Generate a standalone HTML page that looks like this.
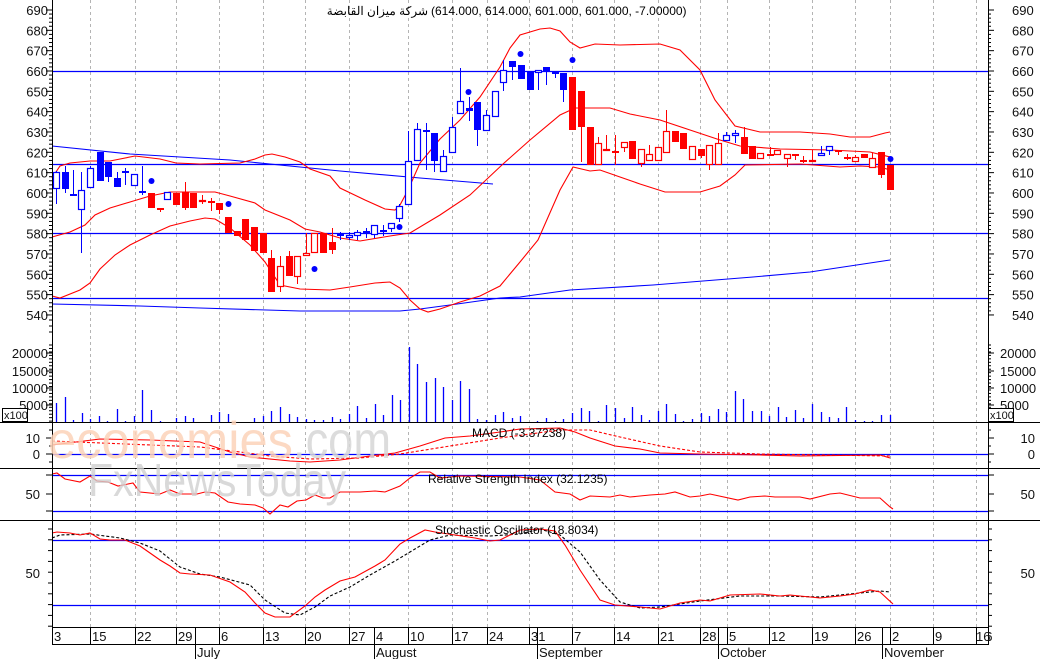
<!DOCTYPE html>
<html><head><meta charset="utf-8">
<style>
html,body{margin:0;padding:0;background:#fff;width:1040px;height:659px;overflow:hidden}
svg{display:block}
text{font-family:"Liberation Sans","Noto Sans CJK SC",sans-serif}
</style></head>
<body>
<svg id="s" width="1040" height="659" viewBox="0 0 1040 659" xmlns="http://www.w3.org/2000/svg">
<rect width="1040" height="659" fill="#fff"/>
<g id="grid"></g>
<g id="lines"></g>
<g id="candles"></g>
<g id="axes"></g>
<g id="wm">
<text x="48" y="458" font-size="52" fill="#fcd2b8" fill-opacity="0.85" textLength="245" lengthAdjust="spacingAndGlyphs">economies</text>
<text x="293" y="458" font-size="52" fill="#d6d6d6" fill-opacity="0.85" textLength="98" lengthAdjust="spacingAndGlyphs">.com</text>
<text x="88" y="496" font-size="46" fill="#cfcfcf" fill-opacity="0.8" textLength="258" lengthAdjust="spacingAndGlyphs">FxNewsToday</text>
</g>
<text x="428" y="15" font-size="12" text-anchor="end" fill="#000">شركة ميزان القابضة</text>
<text x="431" y="15" font-size="12" fill="#000">(614.000, 614.000, 601.000, 601.000, -7.00000)</text>
<text x="472" y="437" font-size="12" fill="#000">MACD (-3.37238)</text>
<text x="428" y="483" font-size="12" fill="#000">Relative Strength Index (32.1235)</text>
<text x="435" y="534" font-size="12" fill="#000">Stochastic Oscillator (18.8034)</text>
</svg>
<script>
var NS="http://www.w3.org/2000/svg";
function el(p,t,a){var e=document.createElementNS(NS,t);for(var k in a)e.setAttribute(k,a[k]);document.getElementById(p).appendChild(e);return e;}
function line(p,x1,y1,x2,y2,c,w,d){var a={x1:x1,y1:y1,x2:x2,y2:y2,stroke:c,'stroke-width':w||1};if(d)a['stroke-dasharray']=d;el(p,'line',a);}
function poly(p,pts,c,d){var a={points:pts.map(function(q){return q.join(',')}).join(' '),fill:'none',stroke:c,'stroke-width':1.1};if(d)a['stroke-dasharray']=d;el(p,'polyline',a);}
function txt(p,x,y,s,anc,sz){var t=el(p,'text',{x:x,y:y,'font-size':sz||13,fill:'#111','text-anchor':anc||'start'});t.textContent=s;}
var L=52,R=988;
var gx=[90,135,176,219,263,305,349,408,452,487,529,572,614,658,700,727,769,812,855,890,933,976];
gx.forEach(function(x){line('grid',x+.5,0,x+.5,627,'#b4b4b4',1,'3,3');});
[422,468,520].forEach(function(y){line('axes',0,y+.5,1040,y+.5,'#000',1);});
line('axes',52,627.5,988,627.5,'#000',1);
line('axes',52,644.5,988,644.5,'#000',1);
line('axes',L+.5,0,L+.5,645,'#000',1);
line('axes',R+.5,0,R+.5,645,'#000',1);
for(var p=690;p>=540;p-=10){var y=10+(690-p)*2.033;txt('axes',48,y+5,String(p),'end');txt('axes',1012,y+5,String(p),'start');
line('axes',L-6,y,L,y,'#000');line('axes',R,y,R+6,y,'#000');
for(var k=1;k<5&&p>540;k++){var yy=y+k*4.066;line('axes',L-3,yy,L,yy,'#000');line('axes',R,yy,R+3,yy,'#000');}}
line('axes',L-3,320,L,320,'#000');line('axes',L-3,326,L,326,'#000');line('axes',L-3,332,L,332,'#000');
[[20000,353],[15000,371],[10000,388],[5000,405]].forEach(function(v){txt('axes',48,v[1]+5,String(v[0]),'end');txt('axes',1000,v[1]+5,String(v[0]),'start');line('axes',L-6,v[1],L,v[1],'#000');line('axes',R,v[1],R+6,v[1],'#000');});
for(var y=345;y<422;y+=3.46){line('axes',L-3,y,L,y,'#000');line('axes',R,y,R+3,y,'#000');}
el('axes','rect',{x:2.5,y:408.5,width:25,height:13,fill:'#fff',stroke:'#000'});txt('axes',4,419,'x100','start',11);
el('axes','rect',{x:988.5,y:408.5,width:25,height:13,fill:'#fff',stroke:'#000'});txt('axes',990,419,'x100','start',11);
txt('axes',40,443,'10','end');txt('axes',40,459,'0','end');txt('axes',1035,443,'10','end');txt('axes',1035,459,'0','end');
[438,454].forEach(function(y){line('axes',L-6,y,L,y,'#000');line('axes',R,y,R+6,y,'#000');});
[430,446,462].forEach(function(y){line('axes',L-3,y,L,y,'#000');line('axes',R,y,R+3,y,'#000');});
txt('axes',40,499,'50','end');txt('axes',1035,499,'50','end');
[475,494,511].forEach(function(y){line('axes',L-6,y,L,y,'#000');line('axes',R,y,R+6,y,'#000');});
txt('axes',40,578,'50','end');txt('axes',1035,578,'50','end');
for(var y=529;y<627;y+=10.8){line('axes',L-4,y,L,y,'#000');line('axes',R,y,R+4,y,'#000');}
var dd=[[52,'3'],[90,'15'],[135,'22'],[176,'29'],[219,'6'],[263,'13'],[305,'20'],[349,'27'],[374,'4'],[408,'10'],[452,'17'],[487,'24'],[529,'31'],[572,'7'],[614,'14'],[658,'21'],[700,'28'],[727,'5'],[769,'12'],[812,'19'],[855,'26'],[890,'2'],[933,'9'],[976,'16']];
dd.forEach(function(d){line('axes',d[0]+.5,627,d[0]+.5,644,'#000');txt('axes',d[0]+2,641,d[1],'start',13);});
[[195,'July'],[374,'August'],[537,'September'],[718,'October'],[882,'November']].forEach(function(m){line('axes',m[0]+.5,627,m[0]+.5,659,'#000');txt('axes',m[0]+2,657,m[1],'start',13);});
el('axes','rect',{x:977,y:628,width:11,height:15,fill:'#fff'});txt('axes',976,641,'16','start',13);
[71,164,233,298,454,475,511,540,605].forEach(function(y){line('lines',L,y+.5,R,y+.5,'#0000ff',1.2);});
poly('lines',[[52,146],[130,154],[230,160],[300,167],[340,171],[420,178],[493,184]],'#0000ff');
poly('lines',[[52,304],[140,306],[200,308],[300,311],[400,311],[420,309],[450,305],[500,298],[520,297],[570,290],[653,285],[753,277],[810,272],[890,260]],'#0000ff');
var red='#ff0000';
poly('lines',[[52,178],[60,166],[70,163],[90,161],[110,161],[135,156],[160,159],[176,163],[200,164],[240,163],[255,159],[265,155],[272,154],[285,157],[300,162],[310,169],[330,176],[340,188],[365,200],[385,209],[395,210],[400,205],[408,190],[420,163],[440,139],[460,120],[480,97],[500,67],[510,48],[520,35],[540,29],[550,28],[560,31],[570,42],[580,48],[595,44],[620,45],[660,44],[680,50],[700,70],[715,100],[735,126],[760,132],[800,132],[830,134],[850,137],[870,137],[885,133],[890,132]],red);
poly('lines',[[52,237],[70,232],[85,225],[95,215],[110,208],[130,202],[150,196],[170,192],[200,192],[215,192],[230,196],[255,203],[265,210],[290,220],[305,229],[320,232],[340,238],[360,241],[390,236],[410,233],[440,215],[470,195],[503,164],[530,140],[560,115],[575,108],[610,108],[630,114],[660,120],[690,130],[720,140],[740,146],[780,149],[830,150],[870,152],[890,157]],red);
poly('lines',[[52,296],[60,298],[80,290],[90,283],[100,269],[115,255],[130,245],[150,235],[170,226],[190,221],[205,218],[215,219],[230,228],[250,245],[265,262],[280,285],[300,289],[330,290],[350,287],[375,283],[390,282],[400,288],[410,300],[420,309],[428,312],[440,309],[460,302],[480,296],[500,286],[520,262],[538,240],[560,190],[573,167],[590,171],[600,170],[620,177],[640,184],[665,192],[700,192],[720,186],[735,175],[745,165],[800,164],[840,167],[860,166],[880,167],[890,170]],red);
var C=[[56,172,189,171,204,'b',0],[65,172,189,166,193,'b',1],[73,194,195,170,195,'b',1],[81,190,210,172,253,'b',0],[90,168,188,166,188,'b',0],[100,152,181,152,181,'b',1],[108,162,177,162,182,'b',1],[117,178,187,172,187,'b',1],[125,171,171,168,185,'b',1],[134,174,186,174,186,'b',0],[142,191,193,166,195,'b',1],
[151,193,208,193,208,'r',1],[160,208,209,208,212,'r',1],[167,192,200,192,200,'b',0],[176,193,205,193,205,'r',1],[185,192,208,182,210,'r',1],[193,193,208,193,208,'r',1],[202,200,202,195,204,'r',0],[211,201,202,198,211,'r',1],[219,203,210,203,214,'r',1],
[228,217,233,217,233,'r',1],[237,231,236,231,236,'r',1],[245,219,240,219,240,'r',1],[254,227,251,227,251,'r',1],[263,233,253,233,253,'r',1],[271,258,292,250,292,'r',1],[280,266,287,256,292,'r',0],[289,256,276,251,276,'r',1],[297,256,277,256,284,'r',0],[306,253,256,233,256,'r',0],[314,233,253,233,253,'r',0],[323,233,253,233,253,'r',1],[332,242,250,228,254,'r',1],
[340,234,236,232,240,'b',1],[349,235,238,232,240,'b',0],[357,232,236,230,240,'b',0],[366,231,233,228,238,'b',1],[374,225,235,225,238,'b',0],[383,230,231,225,236,'b',1],[391,223,229,223,232,'b',0],[399,206,219,204,222,'b',0],[408,161,205,131,205,'b',0],[417,129,161,123,161,'b',0],[426,130,132,123,170,'b',1],[434,133,161,133,172,'b',1],[443,156,172,150,172,'b',0],[452,127,153,117,153,'b',0],[460,101,114,68,114,'b',0],[469,108,111,97,121,'b',1],[477,102,130,102,146,'b',1],[486,115,131,110,131,'b',0],[495,91,117,91,117,'b',0],[503,70,83,60,91,'b',0],[512,61,67,61,80,'b',1],[521,65,79,65,79,'b',1],[530,71,90,71,90,'b',1],[538,70,73,70,90,'b',0],[546,67,72,67,85,'b',1],[555,72,73,72,78,'b',1],[563,73,90,73,102,'b',1],
[572,77,130,77,130,'r',1],[581,91,127,91,162,'r',1],[590,127,165,127,165,'r',1],[598,143,165,137,165,'r',0],[606,149,151,135,151,'r',0],[615,151,152,135,165,'r',1],[624,142,148,142,152,'r',0],[632,141,159,141,159,'r',1],[641,149,164,149,167,'r',0],[649,154,161,145,161,'r',0],[658,147,161,147,161,'r',0],[666,131,153,110,153,'r',0],[675,131,142,131,142,'r',1],[683,133,149,133,149,'r',1],[692,146,160,146,160,'r',0],[701,149,156,149,158,'r',1],[709,145,165,145,170,'r',0],[718,143,165,133,165,'r',0],[726,135,141,132,141,'b',0],[735,133,136,130,143,'b',0],[744,137,154,127,154,'r',1],[752,146,159,146,159,'r',1],[760,153,159,153,159,'r',0],[770,154,156,147,156,'r',1],[777,150,155,150,155,'r',0],[787,154,159,154,167,'r',0],[795,154,155,154,160,'r',1],[803,160,161,156,163,'r',1],[812,160,162,150,162,'r',0],[821,153,156,146,156,'b',0],[829,146,151,146,155,'b',0],[838,150,151,150,155,'r',1],[847,157,158,154,160,'r',1],[855,157,162,155,162,'r',0],[864,154,158,154,158,'r',1],[872,158,168,153,168,'r',0],[881,152,175,152,178,'r',1],[890,165,190,165,190,'r',1]];
C.forEach(function(c){var col=c[5]=='b'?'#0000ff':'#ff0000';line('candles',c[0]+.5,c[3],c[0]+.5,c[4],col,1);
var h=Math.max(c[2]-c[1],1);if(c[6])el('candles','rect',{x:c[0]-3,y:c[1],width:7,height:h+(h<2?1:0),fill:col});else el('candles','rect',{x:c[0]-2.5,y:c[1]+.5,width:6,height:Math.max(h-1,1),fill:'#fff',stroke:col,'stroke-width':1.2});});
[[151,181],[228,204],[314,269],[399,227],[468,92],[520,54],[572,60],[890,159]].forEach(function(d){el('candles','circle',{cx:d[0]+.5,cy:d[1],r:3,fill:'#0000ff'});});
var V=[[56,403],[65,397],[73,420],[82,413],[90,419],[99,416],[107,421],[117,409],[125,421],[134,416],[142,390],[151,410],[160,421],[176,418],[185,416],[193,418],[211,415],[219,412],[228,414],[254,418],[263,416],[271,411],[280,407],[289,414],[297,417],[306,419],[314,420],[323,420],[332,417],[340,419],[349,414],[357,406],[366,418],[375,404],[383,415],[392,395],[400,400],[409,347],[417,364],[426,382],[435,378],[443,387],[452,400],[460,381],[469,389],[477,419],[486,420],[495,415],[503,412],[512,418],[520,416],[529,422],[537,421],[546,418],[555,421],[563,419],[572,413],[581,408],[589,411],[598,421],[606,405],[615,408],[624,418],[632,407],[641,415],[649,420],[658,411],[666,404],[675,414],[683,421],[692,419],[701,413],[709,416],[718,409],[726,412],[735,391],[743,399],[752,411],[761,411],[769,416],[778,407],[786,417],[795,410],[803,418],[812,404],[821,412],[829,417],[838,418],[846,407],[855,420],[864,421],[872,421],[881,415],[890,415]];
V.forEach(function(v){line('candles',v[0]+.5,v[1],v[0]+.5,422,'#0000ff',1.3);});
poly('lines',[[52,445],[100,439],[150,440],[200,442],[230,452],[250,457],[290,461],[310,462],[340,460],[370,456],[395,453],[420,446],[445,438],[470,436],[500,432],[520,429],[560,428],[575,432],[590,438],[615,446],[640,449],[660,453],[700,454],[760,455],[800,456],[880,455],[890,458]],red);
poly('lines',[[52,441],[200,447],[240,452],[270,456],[310,459],[360,458],[400,454],[450,446],[500,438],[560,430],[590,430],[620,437],[660,446],[700,452],[760,454],[890,456]],red,'3,2');
poly('lines',[[52,474],[57,473],[65,479],[80,482],[90,476],[97,481],[108,482],[118,486],[133,483],[140,492],[160,494],[170,490],[180,494],[197,494],[205,492],[215,493],[228,502],[240,504],[255,505],[263,508],[270,514],[280,505],[288,507],[297,501],[306,500],[315,495],[323,498],[330,498],[340,492],[360,492],[375,491],[385,492],[400,486],[410,478],[420,472],[430,472],[440,478],[460,476],[520,477],[540,480],[555,492],[570,494],[580,500],[590,496],[610,497],[620,495],[630,497],[650,495],[665,494],[675,492],[690,497],[700,496],[710,494],[738,500],[750,497],[765,496],[775,497],[800,497],[810,499],[830,494],[840,493],[860,498],[880,498],[890,507],[893,509]],red);
poly('lines',[[52,538],[60,535],[90,534],[120,538],[140,543],[160,551],[180,567],[200,574],[220,577],[250,585],[265,600],[285,613],[300,615],[315,607],[330,596],[350,587],[370,575],[395,561],[410,552],[430,540],[450,535],[490,536],[520,534],[540,529],[560,535],[580,552],[600,580],[620,602],[640,608],[660,607],[700,601],[740,596],[780,596],[820,597],[860,593],[880,591],[890,592]],'#000','3,2');
poly('lines',[[52,533],[57,532],[70,533],[80,535],[90,533],[100,539],[110,540],[125,540],[140,546],[150,553],[160,560],[170,566],[180,573],[190,574],[210,575],[230,582],[245,592],[255,603],[265,613],[275,617],[290,617],[305,606],[315,597],[325,590],[340,581],[355,577],[375,566],[385,560],[400,544],[410,538],[425,530],[435,532],[455,535],[475,538],[490,541],[500,540],[520,530],[540,529],[555,531],[565,545],[580,570],[600,600],[615,605],[640,607],[660,609],[680,603],[700,600],[710,601],[720,598],[730,595],[760,594],[780,596],[790,595],[810,597],[820,598],[840,596],[855,594],[870,590],[880,592],[893,604]],red);
</script>
</body></html>
